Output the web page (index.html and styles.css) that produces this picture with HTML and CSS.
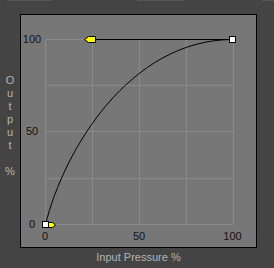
FILE: index.html
```html
<!DOCTYPE html>
<html lang="en">

<head>
    <meta charset="UTF-8">
    <meta name="viewport" content="width=device-width, initial-scale=1.0">
    <title>Pressure Curve</title>
    <link rel="stylesheet" href="styles.css">
</head>

<body>
    <!-- remains of the toolbar above -->
    <div class="top-strip">
        <span class="tick tick-a"></span>
        <span class="tick tick-b"></span>
        <span class="tick tick-c"></span>
    </div>

    <div class="main">
        <!-- vertical axis title -->
        <div class="y-title">O<br>u<br>t<br>p<br>u<br>t<br><br>%</div>

        <div class="chart-col">
            <div class="panel">
                <svg class="curve" width="235" height="232" viewBox="20 15 235 232">
                    <!-- grid -->
                    <g class="grid">
                        <line x1="44.5" y1="39.5" x2="44.5" y2="224.5" />
                        <line x1="91.5" y1="39.5" x2="91.5" y2="224.5" />
                        <line x1="138.5" y1="39.5" x2="138.5" y2="224.5" />
                        <line x1="185.5" y1="39.5" x2="185.5" y2="224.5" />
                        <line x1="232.5" y1="39.5" x2="232.5" y2="224.5" />
                        <line x1="44.5" y1="39.5" x2="232.5" y2="39.5" />
                        <line x1="44.5" y1="85.5" x2="232.5" y2="85.5" />
                        <line x1="44.5" y1="131.5" x2="232.5" y2="131.5" />
                        <line x1="44.5" y1="178.5" x2="232.5" y2="178.5" />
                        <line x1="44.5" y1="224.5" x2="232.5" y2="224.5" />
                    </g>

                    <!-- axis numbers -->
                    <g class="labels">
                        <text x="31" y="43">100</text>
                        <text x="31" y="135">50</text>
                        <text x="31" y="228">0</text>
                        <text x="44" y="240">0</text>
                        <text x="138" y="240">50</text>
                        <text x="231.5" y="240">100</text>
                    </g>

                    <!-- curve and its handle -->
                    <path class="line" d="M44.5 224.5 C63 150 128.6 39.5 232 39.5" />
                    <line class="line" x1="94" y1="39.5" x2="232" y2="39.5" />

                    <polygon class="handle" points="94.5,36.5 87.5,36.5 83.5,39.5 87.5,42.5 94.5,42.5" />
                    <polygon class="handle" points="47.5,222.5 51.5,222.5 54.5,225 51.5,227.5 47.5,227.5" />

                    <rect class="point" x="228.5" y="36.5" width="6" height="6" />
                    <rect class="point" x="41.5" y="221.5" width="6" height="6" />
                </svg>
            </div>
            <div class="x-title">Input Pressure %</div>
        </div>
    </div>
</body>

</html>
```

FILE: styles.css
```css
/* Page */
body {
    margin: 0;
    background-color: #444444;
    font-family: "Liberation Sans", Arial, sans-serif;
    font-size: 11px;
    width: 274px;
    height: 268px;
    overflow: hidden;
}

/* Light marks at the very top */
.top-strip {
    display: flex;
    height: 1px;
}

.tick {
    height: 1px;
    background-color: #565656;
}

.tick-a {
    margin-left: 7px;
    width: 45px;
}

.tick-b {
    margin-left: 85px;
    width: 47px;
}

.tick-c {
    margin-left: 78px;
    width: 12px;
}

.main {
    display: flex;
}

/* Output % written top to bottom */
.y-title {
    width: 20px;
    padding-top: 73px;
    line-height: 13px;
    text-align: center;
    color: #b4b4b4;
}

.chart-col {
    display: flex;
    flex-direction: column;
    padding-top: 13px;
}

.panel {
    width: 235px;
    height: 232px;
    border: 1px solid #000;
    background-color: #777777;
}

.curve {
    display: block;
}

.grid line {
    stroke: #8b8b8b;
    stroke-width: 1;
}

.labels text {
    font-family: "Liberation Sans", Arial, sans-serif;
    font-size: 11px;
    fill: #121212;
    text-anchor: middle;
}

.line {
    fill: none;
    stroke: #000;
    stroke-width: 1;
}

.handle {
    fill: #ffff00;
    stroke: #000;
    stroke-width: 1;
}

.point {
    fill: #fff;
    stroke: #000;
    stroke-width: 1;
}

/* Input Pressure % */
.x-title {
    margin-top: 3px;
    line-height: 13px;
    text-align: center;
    color: #b4b4b4;
}
```
